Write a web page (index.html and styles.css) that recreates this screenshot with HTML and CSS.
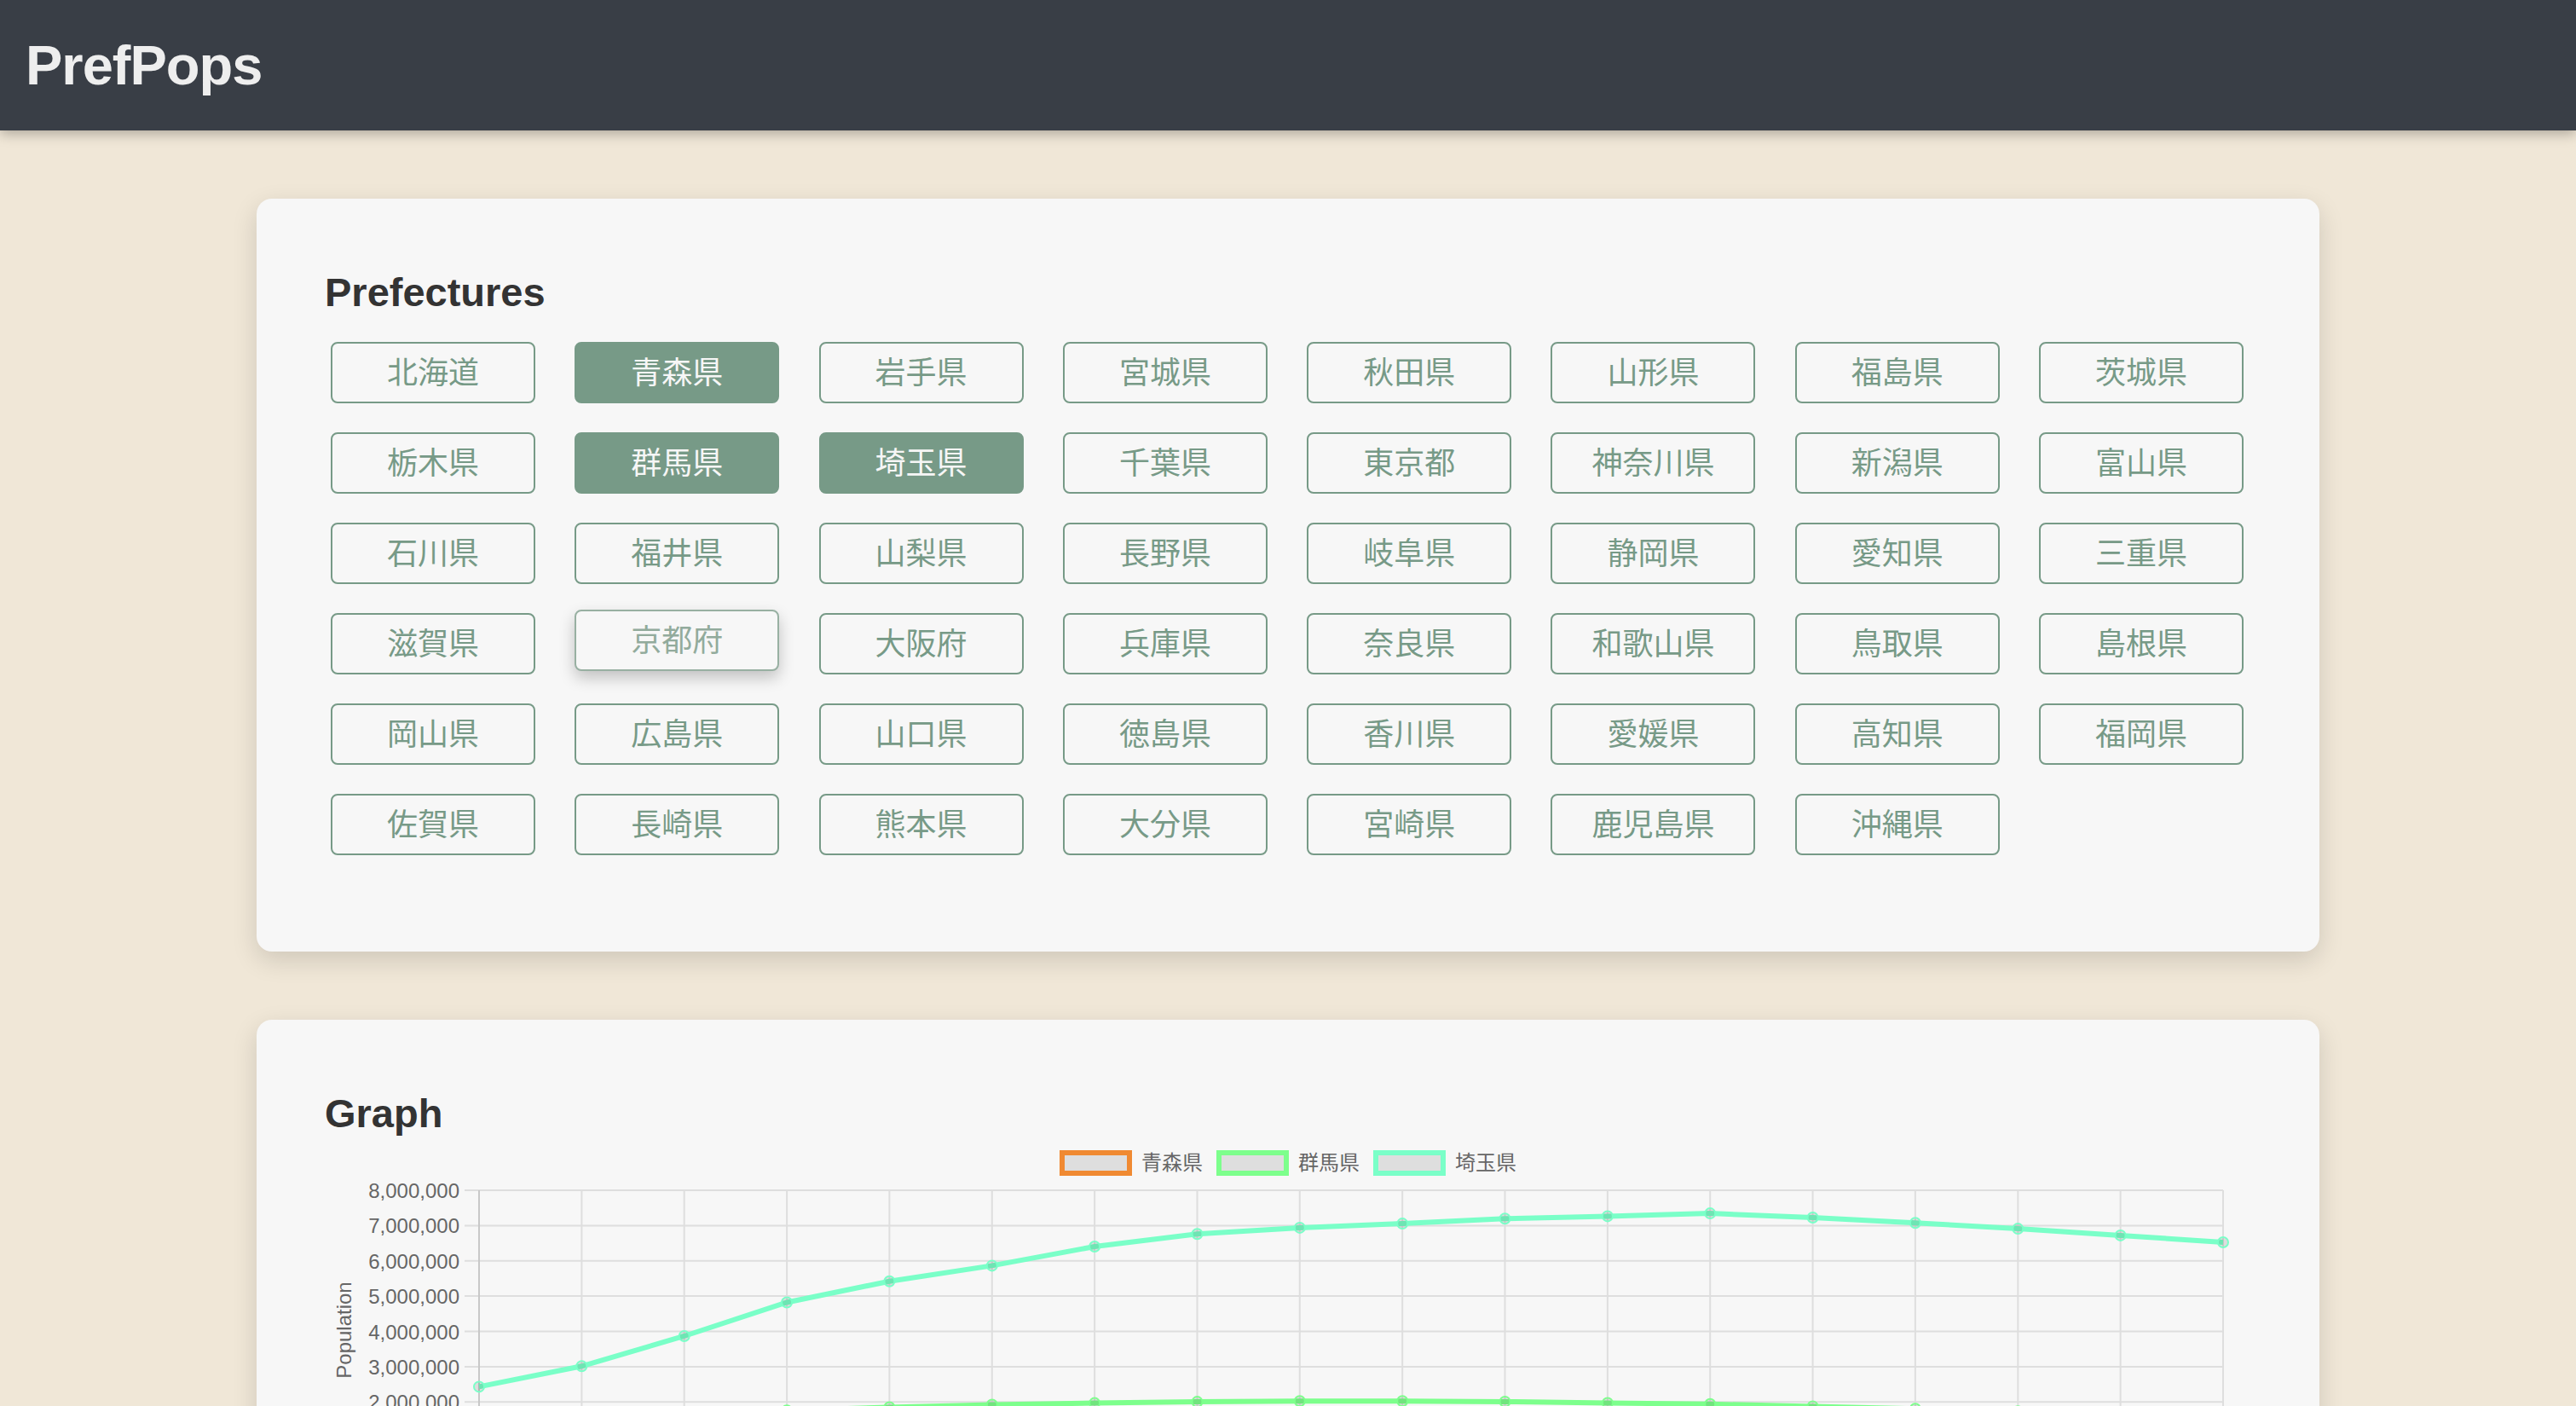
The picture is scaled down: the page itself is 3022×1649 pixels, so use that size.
FILE: index.html
```html
<!DOCTYPE html>
<html lang="ja">
<head>
<meta charset="utf-8">
<title>PrefPops</title>
<link rel="stylesheet" href="styles.css">
</head>
<body>
<header class="topbar">
  <h1 class="brand">PrefPops</h1>
</header>
<main class="content">
  <section class="card">
    <h2 class="card-title">Prefectures</h2>
    <div class="pref-grid">
      <button class="pref">北海道</button>
      <button class="pref is-selected">青森県</button>
      <button class="pref">岩手県</button>
      <button class="pref">宮城県</button>
      <button class="pref">秋田県</button>
      <button class="pref">山形県</button>
      <button class="pref">福島県</button>
      <button class="pref">茨城県</button>
      <button class="pref">栃木県</button>
      <button class="pref is-selected">群馬県</button>
      <button class="pref is-selected">埼玉県</button>
      <button class="pref">千葉県</button>
      <button class="pref">東京都</button>
      <button class="pref">神奈川県</button>
      <button class="pref">新潟県</button>
      <button class="pref">富山県</button>
      <button class="pref">石川県</button>
      <button class="pref">福井県</button>
      <button class="pref">山梨県</button>
      <button class="pref">長野県</button>
      <button class="pref">岐阜県</button>
      <button class="pref">静岡県</button>
      <button class="pref">愛知県</button>
      <button class="pref">三重県</button>
      <button class="pref">滋賀県</button>
      <button class="pref is-hover">京都府</button>
      <button class="pref">大阪府</button>
      <button class="pref">兵庫県</button>
      <button class="pref">奈良県</button>
      <button class="pref">和歌山県</button>
      <button class="pref">鳥取県</button>
      <button class="pref">島根県</button>
      <button class="pref">岡山県</button>
      <button class="pref">広島県</button>
      <button class="pref">山口県</button>
      <button class="pref">徳島県</button>
      <button class="pref">香川県</button>
      <button class="pref">愛媛県</button>
      <button class="pref">高知県</button>
      <button class="pref">福岡県</button>
      <button class="pref">佐賀県</button>
      <button class="pref">長崎県</button>
      <button class="pref">熊本県</button>
      <button class="pref">大分県</button>
      <button class="pref">宮崎県</button>
      <button class="pref">鹿児島県</button>
      <button class="pref">沖縄県</button>
    </div>
  </section>

  <section class="card">
    <h2 class="card-title">Graph</h2>
    <div class="legend">
      <div class="legend-item"><span class="legend-box box-aomori"></span><span class="legend-label">青森県</span></div>
      <div class="legend-item"><span class="legend-box box-gunma"></span><span class="legend-label">群馬県</span></div>
      <div class="legend-item"><span class="legend-box box-saitama"></span><span class="legend-label">埼玉県</span></div>
    </div>
    <svg class="chart" width="2260" height="460" viewBox="0 0 2260 460">
      <g class="grid">
        <line x1="164" y1="17" x2="2227" y2="17"/>
        <line x1="164" y1="58.4" x2="2227" y2="58.4"/>
        <line x1="164" y1="99.8" x2="2227" y2="99.8"/>
        <line x1="164" y1="141.1" x2="2227" y2="141.1"/>
        <line x1="164" y1="182.5" x2="2227" y2="182.5"/>
        <line x1="164" y1="223.9" x2="2227" y2="223.9"/>
        <line x1="164" y1="265.3" x2="2227" y2="265.3"/>
        <line x1="164" y1="306.6" x2="2227" y2="306.6"/>
        <line x1="301.4" y1="17" x2="301.4" y2="365"/>
        <line x1="421.7" y1="17" x2="421.7" y2="365"/>
        <line x1="542.1" y1="17" x2="542.1" y2="365"/>
        <line x1="662.4" y1="17" x2="662.4" y2="365"/>
        <line x1="782.8" y1="17" x2="782.8" y2="365"/>
        <line x1="903.1" y1="17" x2="903.1" y2="365"/>
        <line x1="1023.5" y1="17" x2="1023.5" y2="365"/>
        <line x1="1143.8" y1="17" x2="1143.8" y2="365"/>
        <line x1="1264.2" y1="17" x2="1264.2" y2="365"/>
        <line x1="1384.5" y1="17" x2="1384.5" y2="365"/>
        <line x1="1504.9" y1="17" x2="1504.9" y2="365"/>
        <line x1="1625.2" y1="17" x2="1625.2" y2="365"/>
        <line x1="1745.6" y1="17" x2="1745.6" y2="365"/>
        <line x1="1865.9" y1="17" x2="1865.9" y2="365"/>
        <line x1="1986.3" y1="17" x2="1986.3" y2="365"/>
        <line x1="2106.6" y1="17" x2="2106.6" y2="365"/>
        <line x1="2227" y1="17" x2="2227" y2="365"/>
      </g>
      <g class="axis">
        <line x1="181" y1="17" x2="181" y2="365"/>
        <line x1="164" y1="348" x2="2227" y2="348"/>
      </g>
      <g class="tick-y">
        <text x="158" y="26">8,000,000</text>
        <text x="158" y="67.4">7,000,000</text>
        <text x="158" y="108.8">6,000,000</text>
        <text x="158" y="150.1">5,000,000</text>
        <text x="158" y="191.5">4,000,000</text>
        <text x="158" y="232.9">3,000,000</text>
        <text x="158" y="274.3">2,000,000</text>
        <text x="158" y="315.6">1,000,000</text>
        <text x="158" y="357">0</text>
      </g>
      <text class="axis-title" x="31" y="181" transform="rotate(-90 31 181)">Population</text>
      <g class="tick-x">
        <text x="181" y="396">1960</text>
        <text x="301.4" y="396">1965</text>
        <text x="421.7" y="396">1970</text>
        <text x="542.1" y="396">1975</text>
        <text x="662.4" y="396">1980</text>
        <text x="782.8" y="396">1985</text>
        <text x="903.1" y="396">1990</text>
        <text x="1023.5" y="396">1995</text>
        <text x="1143.8" y="396">2000</text>
        <text x="1264.2" y="396">2005</text>
        <text x="1384.5" y="396">2010</text>
        <text x="1504.9" y="396">2015</text>
        <text x="1625.2" y="396">2020</text>
        <text x="1745.6" y="396">2025</text>
        <text x="1865.9" y="396">2030</text>
        <text x="1986.3" y="396">2035</text>
        <text x="2106.6" y="396">2040</text>
        <text x="2227" y="396">2045</text>
      </g>
      <text class="axis-title" x="1204" y="440">Year</text>

      <g class="series series-saitama">
        <polyline points="181,247.4 301.4,223.3 421.7,188 542.1,148.5 662.4,123.7 782.8,105.4 903.1,83 1023.5,68.3 1143.8,60.9 1264.2,56.1 1384.5,50.3 1504.9,47.4 1625.2,44.1 1745.6,49 1865.9,55.2 1986.3,62.1 2106.6,69.9 2227,78"/>
        <circle cx="181" cy="247.4" r="6"/><circle cx="301.4" cy="223.3" r="6"/><circle cx="421.7" cy="188" r="6"/><circle cx="542.1" cy="148.5" r="6"/><circle cx="662.4" cy="123.7" r="6"/><circle cx="782.8" cy="105.4" r="6"/><circle cx="903.1" cy="83" r="6"/><circle cx="1023.5" cy="68.3" r="6"/><circle cx="1143.8" cy="60.9" r="6"/><circle cx="1264.2" cy="56.1" r="6"/><circle cx="1384.5" cy="50.3" r="6"/><circle cx="1504.9" cy="47.4" r="6"/><circle cx="1625.2" cy="44.1" r="6"/><circle cx="1745.6" cy="49" r="6"/><circle cx="1865.9" cy="55.2" r="6"/><circle cx="1986.3" cy="62.1" r="6"/><circle cx="2106.6" cy="69.9" r="6"/><circle cx="2227" cy="78" r="6"/>
      </g>
      <g class="series series-gunma">
        <polyline points="181,282.7 301.4,281.6 421.7,279.4 542.1,275.3 662.4,271.5 782.8,268.5 903.1,266.6 1023.5,265.1 1143.8,264.2 1264.2,264.3 1384.5,264.9 1504.9,266.4 1625.2,267.8 1745.6,270.4 1865.9,273.2 1986.3,276.2 2106.6,279.5 2227,282.9"/>
        <circle cx="181" cy="282.7" r="6"/><circle cx="301.4" cy="281.6" r="6"/><circle cx="421.7" cy="279.4" r="6"/><circle cx="542.1" cy="275.3" r="6"/><circle cx="662.4" cy="271.5" r="6"/><circle cx="782.8" cy="268.5" r="6"/><circle cx="903.1" cy="266.6" r="6"/><circle cx="1023.5" cy="265.1" r="6"/><circle cx="1143.8" cy="264.2" r="6"/><circle cx="1264.2" cy="264.3" r="6"/><circle cx="1384.5" cy="264.9" r="6"/><circle cx="1504.9" cy="266.4" r="6"/><circle cx="1625.2" cy="267.8" r="6"/><circle cx="1745.6" cy="270.4" r="6"/><circle cx="1865.9" cy="273.2" r="6"/><circle cx="1986.3" cy="276.2" r="6"/><circle cx="2106.6" cy="279.5" r="6"/><circle cx="2227" cy="282.9" r="6"/>
      </g>
      <g class="series series-aomori">
        <polyline points="181,289 301.4,289.4 421.7,288.9 542.1,287.2 662.4,285 782.8,284.9 903.1,286.7 1023.5,286.7 1143.8,286.9 1264.2,288.6 1384.5,291.2 1504.9,293.9 1625.2,296.8 1745.6,300.1 1865.9,303.5 1986.3,306.9 2106.6,310.4 2227,313.9"/>
        <circle cx="181" cy="289" r="6"/><circle cx="301.4" cy="289.4" r="6"/><circle cx="421.7" cy="288.9" r="6"/><circle cx="542.1" cy="287.2" r="6"/><circle cx="662.4" cy="285" r="6"/><circle cx="782.8" cy="284.9" r="6"/><circle cx="903.1" cy="286.7" r="6"/><circle cx="1023.5" cy="286.7" r="6"/><circle cx="1143.8" cy="286.9" r="6"/><circle cx="1264.2" cy="288.6" r="6"/><circle cx="1384.5" cy="291.2" r="6"/><circle cx="1504.9" cy="293.9" r="6"/><circle cx="1625.2" cy="296.8" r="6"/><circle cx="1745.6" cy="300.1" r="6"/><circle cx="1865.9" cy="303.5" r="6"/><circle cx="1986.3" cy="306.9" r="6"/><circle cx="2106.6" cy="310.4" r="6"/><circle cx="2227" cy="313.9" r="6"/>
      </g>
    </svg>
  </section>
</main>
</body>
</html>
```

FILE: styles.css
```css
html {
  overflow: hidden;
}

body {
  margin: 0;
  background: #f0e7d7;
  font-family: "Liberation Sans", "Noto Sans CJK JP", sans-serif;
  color: #333333;
}

.topbar {
  height: 153px;
  background: #393e46;
  display: flex;
  align-items: center;
  padding-left: 30px;
  box-shadow: 0 4px 14px rgba(0, 0, 0, 0.28);
  position: relative;
  z-index: 1;
}

.brand {
  margin: 0;
  font-size: 65px;
  line-height: 64px;
  font-weight: 700;
  letter-spacing: -1px;
  color: #eeeeee;
}

.content {
  padding-top: 80px;
}

.card {
  width: 2420px;
  box-sizing: border-box;
  margin: 0 auto 80px;
  padding: 83px 80px 113px;
  background: #f7f7f7;
  border-radius: 18px;
  box-shadow: 0 10px 30px rgba(0, 0, 0, 0.14);
}

.card-title {
  margin: 0 0 32px;
  font-size: 47px;
  line-height: 54px;
  font-weight: 700;
  color: #333333;
}

.pref-grid {
  display: grid;
  grid-template-columns: repeat(8, 240px);
  column-gap: 46.3px;
  row-gap: 34px;
  margin-left: 7px;
  margin-top: -1px;
}

.pref {
  height: 72px;
  padding: 0;
  margin: 0;
  font-family: "Liberation Sans", "Noto Sans CJK JP", sans-serif;
  font-size: 36px;
  line-height: 1;
  padding-top: 2px;
  color: #779a87;
  background: transparent;
  border: 2px solid #779a87;
  border-radius: 8px;
}

.pref.is-selected {
  background: #779a87;
  color: #f6f6f6;
}

.pref.is-hover {
  color: #92ab9c;
  border-color: #98b0a2;
  background: #f7f7f7;
  transform: translateY(-4px);
  box-shadow: 0 8px 18px rgba(0, 0, 0, 0.22);
}

.card-title + .legend {
  margin-top: -16px;
}

.legend {
  display: flex;
  justify-content: center;
  gap: 16px;
  height: 30px;
}

.legend-item {
  display: flex;
  align-items: center;
  gap: 11px;
}

.legend-box {
  width: 85px;
  height: 30px;
  box-sizing: border-box;
  border: 6px solid #999;
  background: #dedede;
}

.box-aomori { border-color: #f08a32; }
.box-gunma { border-color: #7dff8c; }
.box-saitama { border-color: #7affc8; }

.legend-label {
  font-size: 24px;
  line-height: 30px;
  color: #666666;
}

.chart {
  display: block;
  font-family: "Liberation Sans", "Noto Sans CJK JP", sans-serif;
}

.grid line {
  stroke: #dedede;
  stroke-width: 2;
}

.axis line {
  stroke: #c8c8c8;
  stroke-width: 2;
}

.tick-y text {
  font-size: 24px;
  fill: #666666;
  text-anchor: end;
}

.tick-x text {
  font-size: 24px;
  fill: #666666;
  text-anchor: middle;
}

.axis-title {
  font-size: 24px;
  fill: #666666;
  text-anchor: middle;
}

.series polyline {
  fill: none;
  stroke-width: 6;
}

.series circle {
  fill: rgba(0, 0, 0, 0.1);
  stroke-width: 2;
}

.series-saitama polyline,
.series-saitama circle { stroke: #7affc8; }

.series-gunma polyline,
.series-gunma circle { stroke: #7dff8c; }

.series-aomori polyline,
.series-aomori circle { stroke: #f08a32; }
```
